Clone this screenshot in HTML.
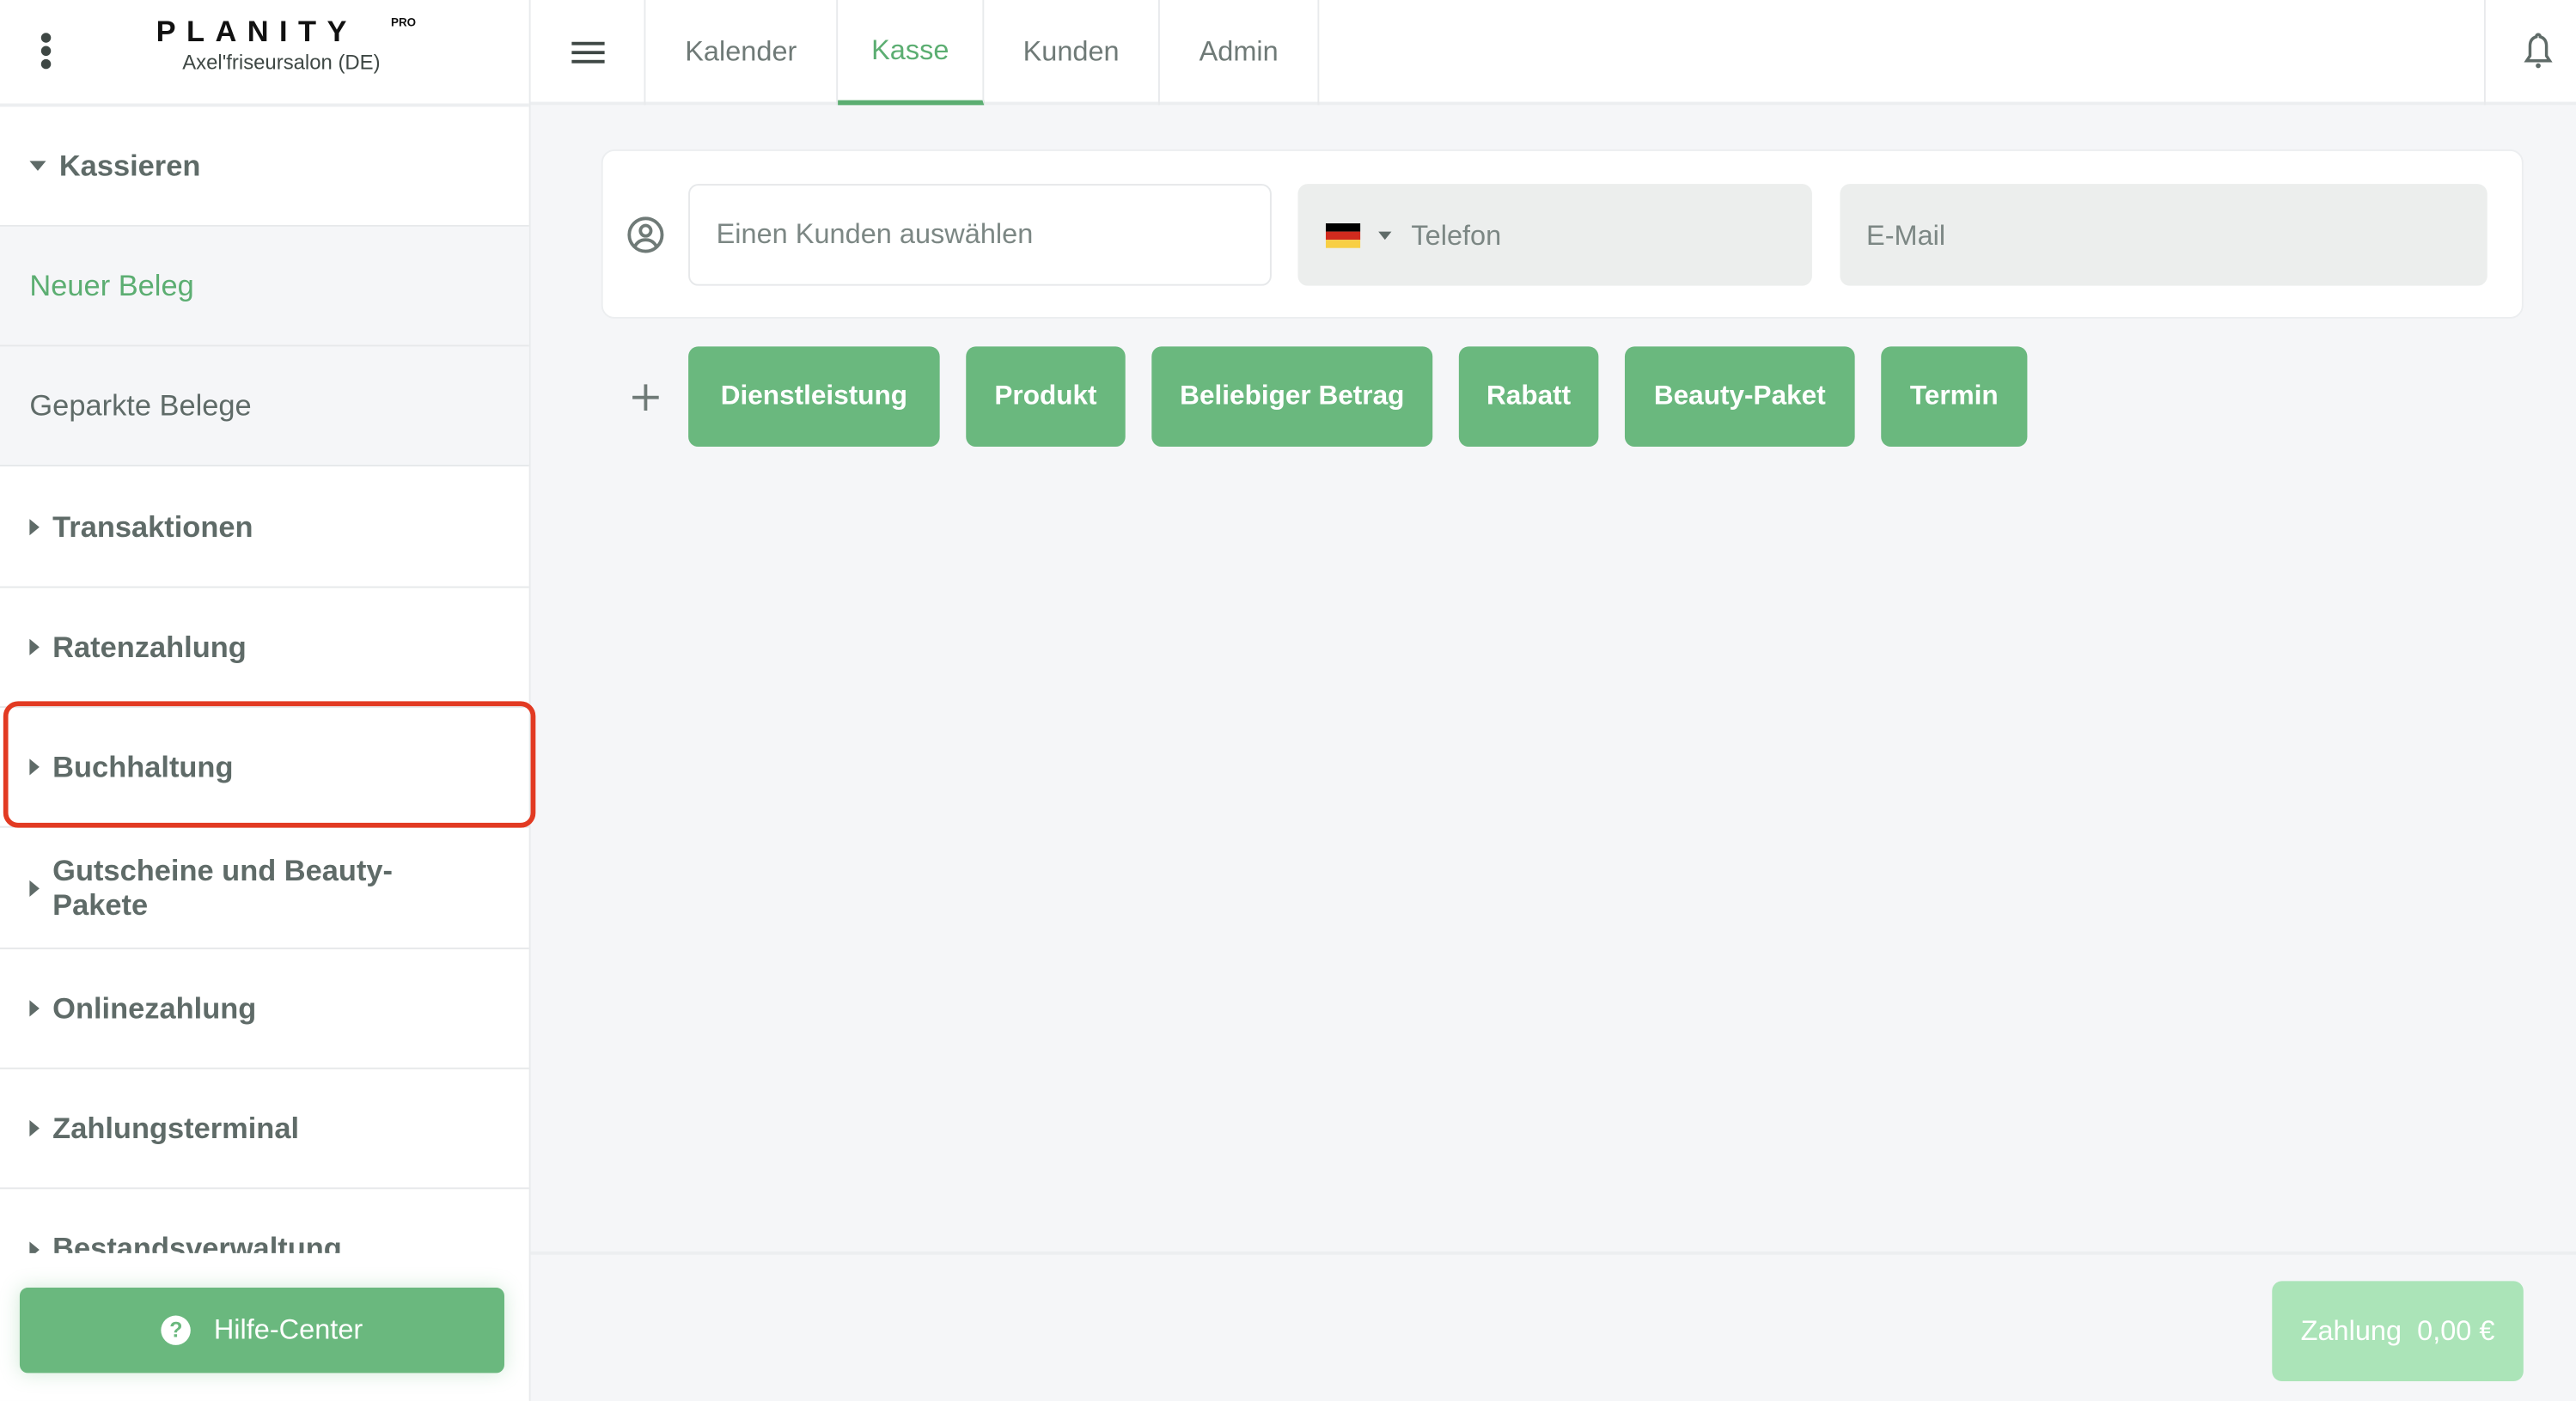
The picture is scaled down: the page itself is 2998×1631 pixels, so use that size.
<!DOCTYPE html>
<html><head><meta charset="utf-8">
<style>
html,body{margin:0;padding:0;width:2998px;height:1630px;overflow:hidden;background:#f5f6f8;}
#w{position:absolute;left:0;top:0;width:1568px;height:853px;transform:scale(1.91199);transform-origin:0 0;font-family:"Liberation Sans",sans-serif;background:#f5f6f8;}
.a{position:absolute;}
.side{left:0;top:0;width:322px;height:853px;background:#fff;border-right:1px solid #e8eaec;}
.item{position:absolute;left:0;width:322px;height:73px;border-bottom:1px solid #e6e8ea;color:#5f6b68;font-size:18px;font-weight:bold;display:flex;align-items:center;box-sizing:border-box;}
.item .tri{width:0;height:0;border-top:5px solid transparent;border-bottom:5px solid transparent;border-left:6px solid #5f6b68;margin:0 8px 0 18px;}
.tab{position:absolute;top:0;height:64px;display:flex;align-items:center;justify-content:center;color:#6f7a77;font-size:17px;border-right:1px solid #e8eaec;box-sizing:border-box;}
.btn{position:absolute;top:211px;height:61px;background:#6ab87e;color:#fff;font-weight:bold;font-size:16.5px;border-radius:6px;display:flex;align-items:center;justify-content:center;}
</style></head><body><div id="w">
<div class="a" style="left:0;top:0;width:1568px;height:64px;background:#fff;border-bottom:2px solid #eceef0;box-sizing:border-box;"></div>
<div class="a side"></div>
<div class="a" style="left:0;top:63px;width:322px;height:2px;background:#eceef0"></div>
<div class="a" style="left:25px;top:20px;width:6px;height:6px;border-radius:3px;background:#3e4744"></div>
<div class="a" style="left:25px;top:28px;width:6px;height:6px;border-radius:3px;background:#3e4744"></div>
<div class="a" style="left:25px;top:36px;width:6px;height:6px;border-radius:3px;background:#3e4744"></div>
<div class="a" style="left:95px;top:9px;font-size:18px;font-weight:bold;letter-spacing:6.5px;color:#111">PLANITY</div>
<div class="a" style="left:238px;top:11px;font-size:7px;font-weight:bold;color:#111">PRO</div>
<div class="a" style="left:111px;top:31px;font-size:12.5px;color:#3e4744">Axel'friseursalon (DE)</div>
<div class="tab" style="left:323px;width:70px;">
<svg width="22" height="16" viewBox="0 0 22 16"><rect x="1" y="1.5" width="20" height="2" fill="#3e4744"/><rect x="1" y="7" width="20" height="2" fill="#3e4744"/><rect x="1" y="12.5" width="20" height="2" fill="#3e4744"/></svg></div>
<div class="tab" style="left:393px;width:117px;">Kalender</div>
<div class="tab" style="left:510px;width:89px;color:#5cae72;border-bottom:3px solid #5cae72;">Kasse</div>
<div class="tab" style="left:599px;width:107px;">Kunden</div>
<div class="tab" style="left:706px;width:97px;">Admin</div>
<div class="a" style="left:1512px;top:0;width:1px;height:64px;background:#e8eaec"></div>
<svg class="a" style="left:1535px;top:19px" width="20" height="24" viewBox="0 0 20 24"><path d="M10 2c-0.8 0-1.2 0.6-1.2 1.4C6 4.2 5 6.5 5 9v6l-2 3h14l-2-3V9c0-2.5-1-4.8-3.8-5.6C11.2 2.6 10.8 2 10 2z" fill="none" stroke="#5f6b68" stroke-width="1.8"/><circle cx="10" cy="21" r="1.5" fill="#5f6b68"/></svg>
<div class="item" style="top:65px;height:73px;"><span style="width:0;height:0;border-left:5px solid transparent;border-right:5px solid transparent;border-top:6px solid #5f6b68;margin:0 8px 0 18px"></span>Kassieren</div>
<div class="item" style="top:138px;background:#f5f6f8;color:#5cae72;font-weight:normal;padding-left:18px;">Neuer Beleg</div>
<div class="item" style="top:211px;background:#f5f6f8;font-weight:normal;padding-left:18px;">Geparkte Belege</div>
<div class="item" style="top:285px;"><span class="tri"></span>Transaktionen</div>
<div class="item" style="top:358px;"><span class="tri"></span>Ratenzahlung</div>
<div class="item" style="top:431px;"><span class="tri"></span>Buchhaltung</div>
<div class="item" style="top:504px;height:74px;line-height:21px;"><span class="tri"></span><span>Gutscheine und Beauty-<br>Pakete</span></div>
<div class="item" style="top:578px;"><span class="tri"></span>Onlinezahlung</div>
<div class="item" style="top:651px;"><span class="tri"></span>Zahlungsterminal</div>
<div class="a" style="left:0;top:724px;width:322px;height:39px;overflow:hidden;"><div class="item" style="top:0;border:none;height:73px;"><span class="tri"></span>Bestandsverwaltung</div></div>
<div class="a" style="left:2px;top:427px;width:318px;height:71px;border:3px solid #e23a22;border-radius:9px;"></div>
<div class="a" style="left:12px;top:784px;width:295px;height:52px;background:#6ab87e;border-radius:5px;box-shadow:0 0 12px rgba(106,184,126,0.3);color:#fff;font-size:17px;display:flex;align-items:center;justify-content:center;">
<span style="display:inline-block;width:18px;height:18px;border-radius:9px;background:#fff;color:#6ab87e;font-size:13px;font-weight:bold;text-align:center;line-height:18px;margin-right:14px;">?</span>Hilfe-Center</div>
<div class="a" style="left:366px;top:91px;width:1170px;height:103px;background:#fff;border:1px solid #eceef0;border-radius:8px;box-sizing:border-box;"></div>
<svg class="a" style="left:381px;top:131px" width="24" height="24" viewBox="0 0 24 24"><circle cx="12" cy="12" r="10" fill="none" stroke="#6f7a77" stroke-width="2"/><circle cx="12" cy="9.5" r="3.2" fill="none" stroke="#6f7a77" stroke-width="2"/><path d="M5.5 19c1.5-3 4-4 6.5-4s5 1 6.5 4" fill="none" stroke="#6f7a77" stroke-width="2"/></svg>
<div class="a" style="left:419px;top:112px;width:355px;height:62px;border:1px solid #e6e8ea;border-radius:6px;box-sizing:border-box;color:#7c8784;font-size:17px;line-height:60px;padding-left:16px;">Einen Kunden auswählen</div>
<div class="a" style="left:790px;top:112px;width:313px;height:62px;background:#eceeed;border-radius:6px;"></div>
<div class="a" style="left:807px;top:136px;width:21px;height:5px;background:#000"></div>
<div class="a" style="left:807px;top:141px;width:21px;height:5px;background:#d12b1e"></div>
<div class="a" style="left:807px;top:146px;width:21px;height:5px;background:#f8cf44"></div>
<div class="a" style="left:839px;top:141px;width:0;height:0;border-left:4px solid transparent;border-right:4px solid transparent;border-top:5px solid #5f6b68"></div>
<div class="a" style="left:859px;top:134px;color:#7c8784;font-size:17px;">Telefon</div>
<div class="a" style="left:1120px;top:112px;width:394px;height:62px;background:#eceeed;border-radius:6px;color:#7c8784;font-size:17px;line-height:63px;box-sizing:border-box;padding-left:16px;">E-Mail</div>
<div class="a" style="left:385px;top:241px;width:16px;height:2px;background:#6f7a77"></div>
<div class="a" style="left:392px;top:234px;width:2px;height:16px;background:#6f7a77"></div>
<div class="btn" style="left:419px;width:153px;">Dienstleistung</div>
<div class="btn" style="left:588px;width:97px;">Produkt</div>
<div class="btn" style="left:701px;width:171px;">Beliebiger Betrag</div>
<div class="btn" style="left:888px;width:85px;">Rabatt</div>
<div class="btn" style="left:989px;width:140px;">Beauty-Paket</div>
<div class="btn" style="left:1145px;width:89px;">Termin</div>
<div class="a" style="left:323px;top:762px;width:1245px;height:2px;background:#eceef0"></div>
<div class="a" style="left:1383px;top:780px;width:153px;height:61px;background:#abe4b8;border-radius:6px;color:#fff;font-size:17px;display:flex;align-items:center;justify-content:center;">Zahlung&nbsp; 0,00 €</div>
</div></body></html>
